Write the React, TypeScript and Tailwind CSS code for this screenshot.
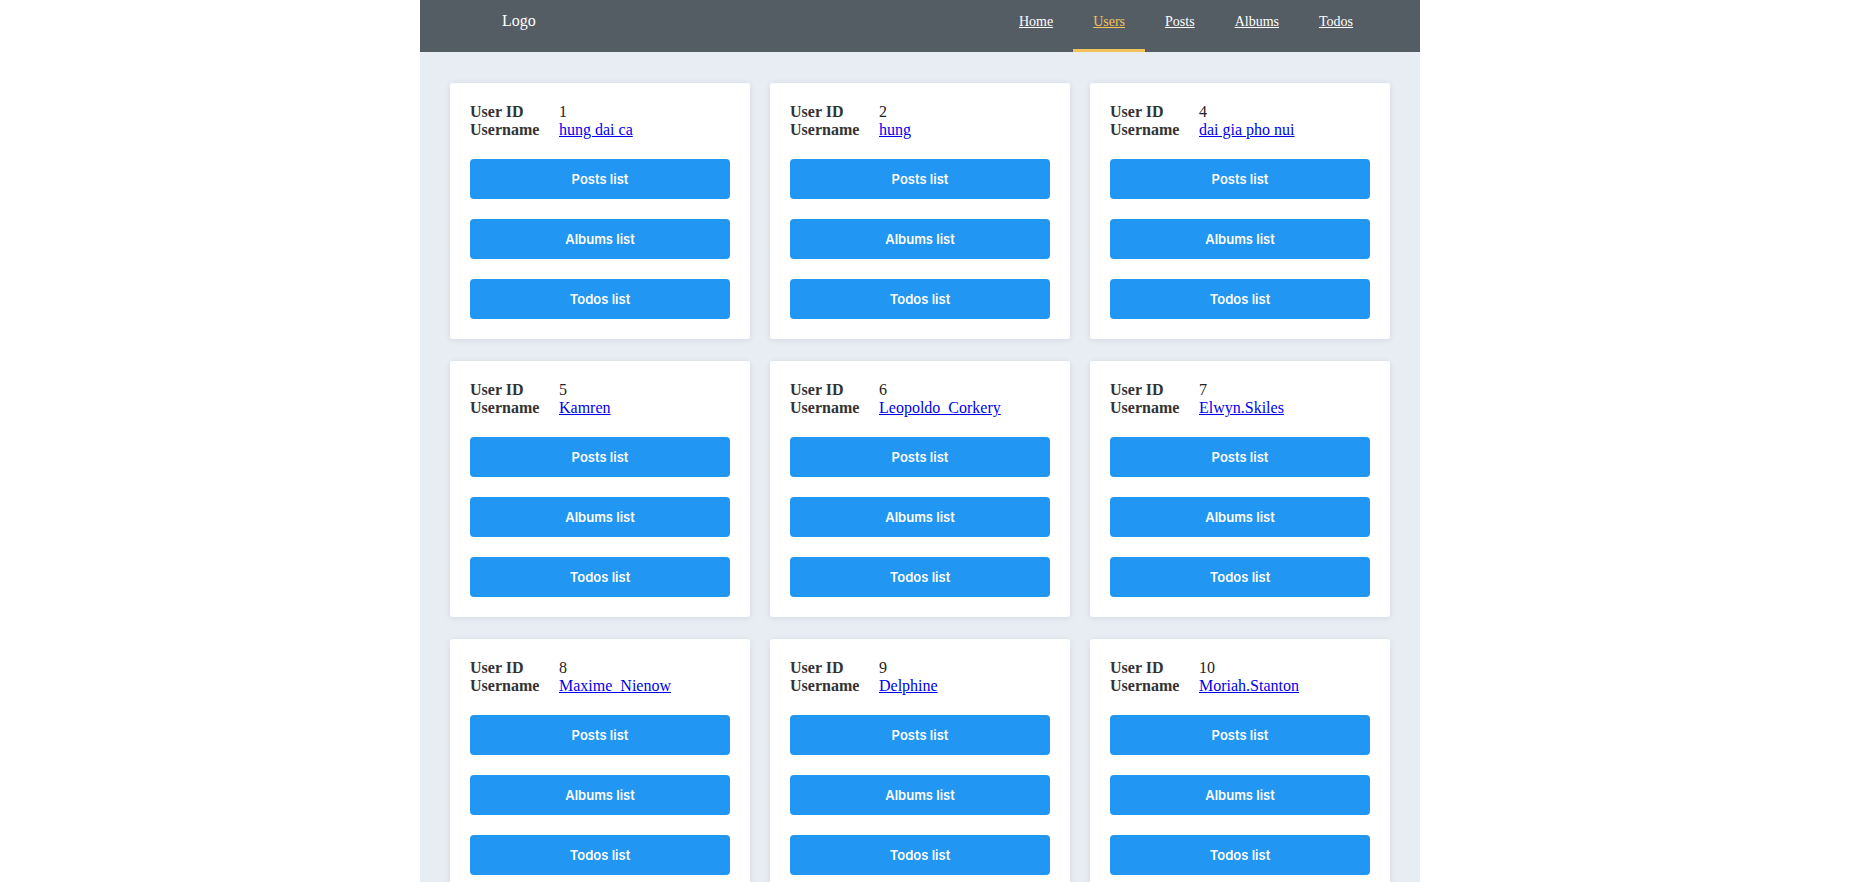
import React from "react";

const users = [
  { id: 1, name: "hung dai ca" },
  { id: 2, name: "hung" },
  { id: 4, name: "dai gia pho nui" },
  { id: 5, name: "Kamren" },
  { id: 6, name: "Leopoldo_Corkery" },
  { id: 7, name: "Elwyn.Skiles" },
  { id: 8, name: "Maxime_Nienow" },
  { id: 9, name: "Delphine" },
  { id: 10, name: "Moriah.Stanton" },
];

const links = ["Home", "Users", "Posts", "Albums", "Todos"];

function Card({ id, name }: { id: number; name: string }) {
  return (
    <div className="bg-white rounded-[3px] shadow-[0_1px_6px_rgba(40,60,90,0.10)] p-5">
      <div
        className="grid grid-cols-[89px_1fr] text-[16px] leading-[18px] text-[#222]"
        style={{ fontFamily: '"Liberation Serif", "Times New Roman", serif' }}
      >
        <div className="font-bold text-[#333]">User ID</div>
        <div>{id}</div>
        <div className="font-bold text-[#333]">Username</div>
        <div>
          <a href="#" className="text-[#0000ee] underline">
            {name}
          </a>
        </div>
      </div>
      <div className="mt-5 flex flex-col gap-5">
        {["Posts list", "Albums list", "Todos list"].map((t) => (
          <button
            key={t}
            className="h-10 w-full rounded-[4px] bg-[#2196f3] text-white text-[13px] font-semibold pt-[2px]"
            style={{ fontFamily: 'Inter, "Liberation Sans", sans-serif' }}
          >
            {t}
          </button>
        ))}
      </div>
    </div>
  );
}

export default function App() {
  return (
    <div className="min-h-screen bg-white">
      <div className="ml-[420px] w-[1000px] bg-[#e8edf3] min-h-screen">
        <nav
          className="h-[52px] bg-[#545c64] flex justify-between pl-[82px] pr-[47px] text-white"
          style={{ fontFamily: '"Liberation Serif", "Times New Roman", serif' }}
        >
          <div className="pt-[12px] leading-[18px] text-[16px]">Logo</div>
          <div className="flex text-[14px]">
            {links.map((l) => {
              const active = l === "Users";
              return (
                <a
                  key={l}
                  href="#"
                  className={
                    "px-5 pt-[14px] leading-[16px] underline h-[52px] border-b-[3px] " +
                    (active
                      ? "text-[#f2c35b] border-[#f2c35b]"
                      : "text-white border-transparent")
                  }
                >
                  {l}
                </a>
              );
            })}
          </div>
        </nav>
        <div className="px-[30px] pt-[31px] pb-8 grid grid-cols-3 gap-x-5 gap-y-[22px]">
          {users.map((u) => (
            <Card key={u.id} id={u.id} name={u.name} />
          ))}
        </div>
      </div>
    </div>
  );
}
